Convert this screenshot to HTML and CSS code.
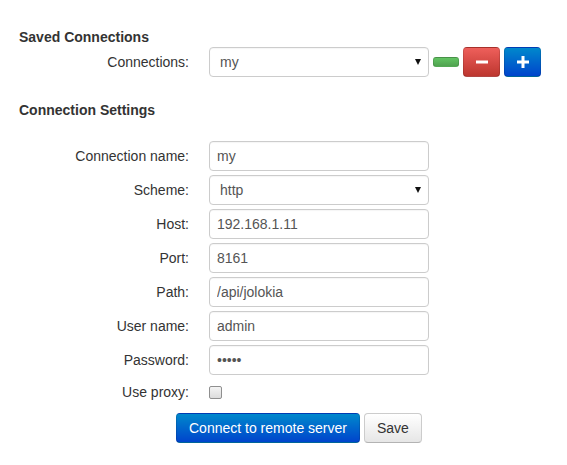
FILE: index.html
```html
<!DOCTYPE html>
<html>
<head>
<meta charset="utf-8">
<link rel="stylesheet" href="styles.css">
</head>
<body>
<div class="page">
  <h4 class="section-title">Saved Connections</h4>
  <div class="saved-row">
    <label class="label">Connections:</label>
    <div class="controls">
      <div class="select-wrap">
        <select class="field select"><option>my</option></select>
      </div>
      <button class="btn-mini btn-success" type="button"></button>
      <button class="btn-icon btn-danger" type="button" aria-label="Delete">
        <svg width="12" height="12" viewBox="0 0 12 12"><rect x="0" y="4.5" width="12" height="3" fill="#fff"/></svg>
      </button>
      <button class="btn-icon btn-primary" type="button" aria-label="Add">
        <svg width="12" height="12" viewBox="0 0 12 12"><rect x="0" y="4.5" width="12" height="3" fill="#fff"/><rect x="4.5" y="0" width="3" height="12" fill="#fff"/></svg>
      </button>
    </div>
  </div>

  <h4 class="section-title second">Connection Settings</h4>
  <div class="form-grid">
    <label class="label">Connection name:</label>
    <input class="field" type="text" value="my">
    <label class="label">Scheme:</label>
    <div class="select-wrap">
      <select class="field select"><option>http</option></select>
    </div>
    <label class="label">Host:</label>
    <input class="field" type="text" value="192.168.1.11">
    <label class="label">Port:</label>
    <input class="field" type="text" value="8161">
    <label class="label">Path:</label>
    <input class="field" type="text" value="/api/jolokia">
    <label class="label">User name:</label>
    <input class="field" type="text" value="admin">
    <label class="label">Password:</label>
    <input class="field" type="password" value="admin">
    <label class="label">Use proxy:</label>
    <div class="check-cell"><input class="check" type="checkbox"></div>
  </div>
  <div class="actions">
    <button class="btn btn-primary" type="button">Connect to remote server</button>
    <button class="btn btn-default" type="button">Save</button>
  </div>
</div>
</body>
</html>
```
FILE: styles.css
```css
html, body {
  margin: 0;
  background: #fff;
}
body {
  font-family: "Liberation Sans", Arial, sans-serif;
  font-size: 14px;
  line-height: 20px;
  color: #333;
}
.page {
  padding: 27px 0 0 19px;
}
.section-title {
  margin: 0;
  font-size: 14px;
  line-height: 20px;
  font-weight: bold;
  color: #333;
}
.section-title.second {
  margin-top: 23px;
}
.saved-row {
  display: grid;
  grid-template-columns: 170px auto;
  column-gap: 20px;
  align-items: center;
}
.label {
  text-align: right;
  color: #333;
}
.controls {
  display: flex;
  align-items: center;
  gap: 4px;
}
.select-wrap {
  position: relative;
  width: 220px;
  height: 30px;
}
.select-wrap::after {
  content: "";
  position: absolute;
  right: 8px;
  top: 12px;
  border-left: 3px solid transparent;
  border-right: 3px solid transparent;
  border-top: 6px solid #111;
  pointer-events: none;
}
.field {
  box-sizing: border-box;
  width: 220px;
  height: 30px;
  margin: 0;
  border: 1px solid #ccc;
  border-radius: 4px;
  padding: 0 7px;
  font-family: "Liberation Sans", Arial, sans-serif;
  font-size: 14px;
  color: #555;
  background: #fff;
  box-shadow: inset 0 1px 1px rgba(0,0,0,0.04);
  outline: none;
}
.select {
  -webkit-appearance: none;
  appearance: none;
  padding: 0 24px 0 10px;
}
.form-grid {
  margin-top: 21px;
  display: grid;
  grid-template-columns: 170px 220px;
  grid-template-rows: repeat(7, 30px) 26px;
  column-gap: 20px;
  row-gap: 4px;
  align-items: center;
}
.check-cell {
  display: flex;
  align-items: center;
}
.check {
  -webkit-appearance: none;
  appearance: none;
  box-sizing: border-box;
  width: 13px;
  height: 13px;
  margin: 0;
  border: 1px solid #8f8f8f;
  border-radius: 2px;
  background: linear-gradient(#f4f4f4, #dcdcdc);
}
.btn-mini {
  width: 26px;
  height: 10px;
  padding: 0;
  border: 1px solid rgba(0,0,0,0.12);
  border-radius: 3px;
}
.btn-icon {
  display: flex;
  align-items: center;
  justify-content: center;
  width: 37px;
  height: 30px;
  padding: 0;
  border: 1px solid rgba(0,0,0,0.12);
  border-bottom-color: rgba(0,0,0,0.25);
  border-radius: 4px;
}
.btn-success {
  background: linear-gradient(#62c462, #51a351);
}
.btn-danger {
  background: linear-gradient(#ee5f5b, #bd362f);
}
.btn-primary {
  background: linear-gradient(#0088cc, #0044cc);
  color: #fff;
}
.actions {
  display: flex;
  gap: 4px;
  margin-top: 8px;
  padding-left: 157px;
}
.btn {
  height: 30px;
  padding: 0 12px;
  border-radius: 4px;
  font-family: "Liberation Sans", Arial, sans-serif;
  font-size: 14px;
  line-height: 20px;
  border: 1px solid rgba(0,0,0,0.12);
  border-bottom-color: rgba(0,0,0,0.25);
}
.btn-primary.btn {
  color: #fff;
}
.btn-default {
  color: #333;
  background: linear-gradient(#ffffff, #e6e6e6);
  border: 1px solid #ccc;
  border-bottom-color: #b3b3b3;
}
```
